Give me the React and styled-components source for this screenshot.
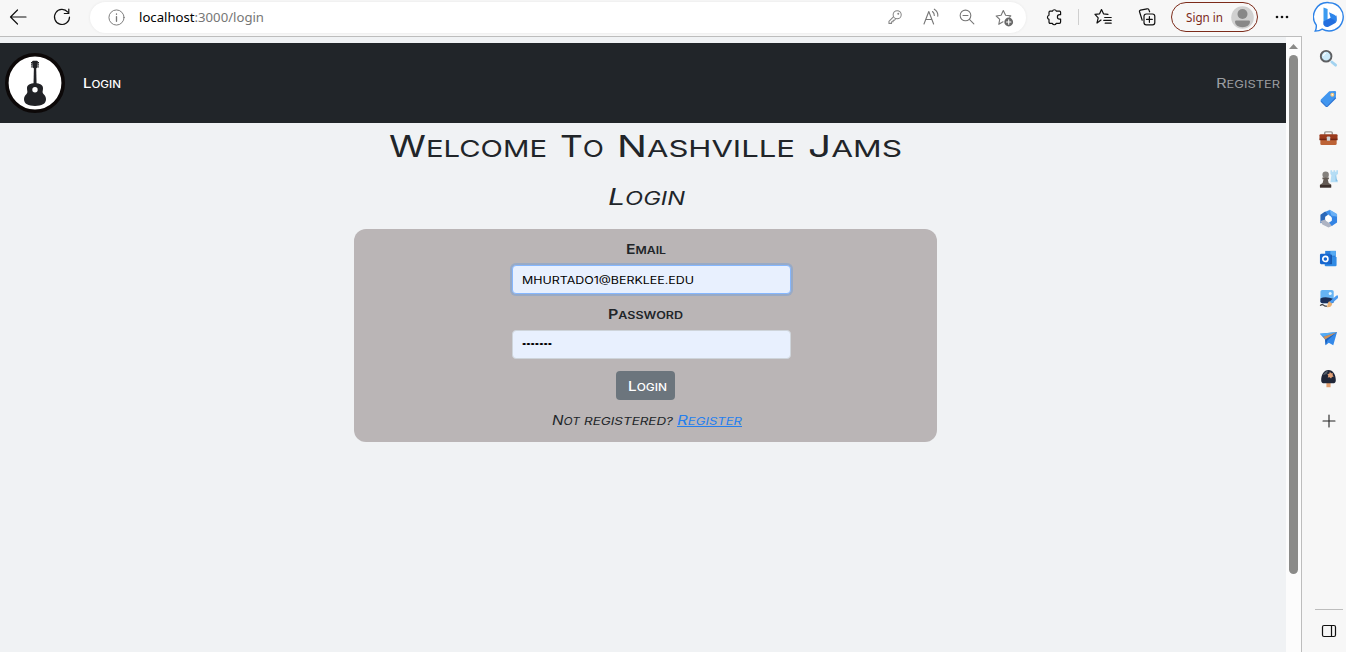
import React, { useLayoutEffect, useRef, useState } from "react";
import styled, { createGlobalStyle, css } from "styled-components";

const Global = createGlobalStyle`
  * { box-sizing: border-box; }
  html, body { margin: 0; height: 100%; overflow: hidden; background: #f7f7f7; }
  #root { height: 100%; }
  svg { display: block; flex: none; }
`;

const Browser = styled.div`
  display: flex;
  width: 1346px;
  height: 652px;
  background: #f7f7f7;
  font-family: "Noto Sans", sans-serif;
`;
const Main = styled.div`
  display: flex;
  flex-direction: column;
  width: 1302px;
`;
const Toolbar = styled.header`
  display: flex;
  align-items: center;
  height: 36px;
  padding: 0 10px 2px 8px;
`;
const ToolIcon = styled.span`
  display: flex;
  align-items: center;
  justify-content: center;
  width: ${(p) => p.$w || 20}px;
  height: 34px;
  margin-left: ${(p) => p.$ml || 0}px;
`;
const AddressBar = styled.div`
  display: flex;
  align-items: center;
  width: 936px;
  height: 31px;
  margin-left: 18px;
  padding: 0 12px 0 16px;
  border-radius: 16px;
  background: #fff;
  box-shadow: 0 0 3px rgba(0, 0, 0, 0.07);
`;
const Url = styled.span`
  flex: 1;
  margin-left: 13px;
  font-size: 13.2px;
  line-height: 30px;
  color: #000;
`;
const UrlPath = styled.span`
  color: #767676;
`;
const Divider = styled.span`
  width: 1px;
  height: 16px;
  margin-left: 14px;
  background: #cfcfcf;
`;
const SignIn = styled.div`
  display: flex;
  align-items: center;
  justify-content: space-between;
  width: 87px;
  height: 30px;
  margin-left: 14px;
  padding: 0 3px 0 14px;
  border: 1px solid #7c2b1a;
  border-radius: 15px;
  font-size: 12.3px;
  color: #7c2b1a;
`;

const Viewport = styled.div`
  display: flex;
  flex: 1;
  border-top: 1px solid #bdbdbd;
  border-right: 1px solid #bdbdbd;
`;
const Page = styled.main`
  display: flex;
  flex-direction: column;
  align-items: center;
  width: 1286px;
  padding-top: 6px;
  background: #f0f2f4;
  color: #212529;
  font-family: Inter, sans-serif;
`;
const Scrollbar = styled.div`
  display: flex;
  flex-direction: column;
  align-items: center;
  width: 15px;
  padding-top: 7px;
  background: #fcfcfc;
`;
const Thumb = styled.div`
  width: 9px;
  height: 519px;
  margin-top: 6px;
  border-radius: 5px;
  background: #8b8b89;
`;

const Navbar = styled.nav`
  display: flex;
  align-items: center;
  width: 100%;
  height: 80px;
  padding: 0 6px 0 5px;
  background: #212529;
`;
const NavLink = styled.a`
  margin-left: ${(p) => (p.$end ? "auto" : "18px")};
  font-size: 10.2px;
  line-height: 14px;
  font-weight: ${(p) => (p.$end ? 400 : 500)};
  color: ${(p) => (p.$end ? "#9b9da0" : "#fff")};
`;
const Title = styled.h1`
  display: flex;
  gap: 13px;
  margin: 6px 0 0 4px;
  height: 35px;
  font-size: 23.2px;
  line-height: 34px;
  font-weight: 400;
`;
const Subtitle = styled.h2`
  margin: 17px 0 0 7px;
  height: 32px;
  font-size: 18px;
  line-height: 32px;
  font-style: italic;
  font-weight: 400;
`;
const Card = styled.section`
  display: flex;
  flex-direction: column;
  align-items: center;
  width: 583px;
  height: 213px;
  margin: 16px 0 0 5px;
  border-radius: 12px;
  background: #bab5b6;
`;
const Label = styled.label`
  height: 16px;
  margin-top: ${(p) => p.$mt}px;
  font-size: 10px;
  line-height: 16px;
  font-weight: 600;
`;
const Field = styled.div`
  display: flex;
  align-items: center;
  width: 279px;
  height: 29px;
  margin: ${(p) => p.$mt}px 0 0 12px;
  padding: 1px 0 0 9px;
  border: 1px solid #ced4da;
  border-radius: 4px;
  background: #e8f0fe;
  color: #000;
  font-size: 10.3px;
  font-weight: 400;
  ${(p) =>
    p.$focused &&
    css`
      border-color: #86b7fe;
      box-shadow: 0 0 0 2px rgba(124, 160, 212, 0.55);
    `}
`;
const Dots = styled.span`
  padding-bottom: 3px;
  font-family: "Liberation Sans", sans-serif;
  font-size: 8px;
  line-height: 10px;
`;
const Button = styled.button`
  display: flex;
  align-items: center;
  justify-content: center;
  width: 59px;
  height: 29px;
  margin-top: 12px;
  padding: 0 1px 0 0;
  border: 0;
  border-radius: 4px;
  background: #6c757d;
  color: #fff;
  font: 500 10.6px Inter, sans-serif;
`;
const Hint = styled.p`
  display: flex;
  align-items: baseline;
  gap: 4px;
  margin: 12px 0 0 2px;
  font-size: 10.2px;
  line-height: 16px;
  font-style: italic;
`;
const HintLink = styled.a`
  height: 15px;
  border-bottom: 1px solid #267fee;
  color: #267fee;
`;

const Sidebar = styled.aside`
  display: flex;
  flex-direction: column;
  align-items: center;
  width: 44px;
  padding: 0 0 0 9px;
`;
const SideItem = styled.div`
  display: flex;
  align-items: center;
  justify-content: center;
  width: 32px;
  height: ${(p) => p.$h || 40}px;
  margin-top: ${(p) => p.$mt || 0}px;
`;
const SideRule = styled.div`
  width: 28px;
  height: 1px;
  margin-top: auto;
  background: #bdbdbd;
`;

const Slot = styled.span`
  display: inline-block;
  width: ${(p) => p.$width}px;
  white-space: nowrap;
`;
const Stretch = styled.span`
  display: inline-block;
  transform-origin: 0 50%;
  ${(p) =>
    p.$caps &&
    css`
      text-transform: uppercase;
      &::first-letter { font-size: ${p.$flat ? "1em" : "1.28em"}; }
    `}
`;

/* Extended lettering: widens its text until it fills the given width. */
function Wide({ width, caps = true, flat = false, children }) {
  const ref = useRef(null);
  const [scale, setScale] = useState(1);
  useLayoutEffect(() => {
    setScale(width / ref.current.getBoundingClientRect().width);
  }, [width]);
  return (
    <Slot $width={width}>
      <Stretch ref={ref} $caps={caps} $flat={flat} style={{ transform: `scaleX(${scale})` }}>
        {children}
      </Stretch>
    </Slot>
  );
}

const Line = ({ w = 18, h = w, box = "0 0 18 18", color = "#222", sw = 1.1, children }) => (
  <svg width={w} height={h} viewBox={box} fill="none" stroke={color} strokeWidth={sw} strokeLinecap="round" strokeLinejoin="round">
    {children}
  </svg>
);

const GuitarLogo = () => (
  <svg width="60" height="60" viewBox="0 0 60 60">
    <circle cx="30" cy="30" r="28.2" fill="#fff" stroke="#0c0808" strokeWidth="3.6" />
    <g fill="#212226">
      <path d="M27 8.5 28 7.8h4l1 .7-.7 6-1 .8h-2.6l-1-.8z" />
      <path d="M26 9h1.3v1.4H26zM26 11.2h1.3v1.4H26zM26.2 13.3h1.3v1.2h-1.3zM32.7 9H34v1.4h-1.3zM32.7 11.2H34v1.4h-1.3zM32.5 13.3h1.3v1.2h-1.3z" />
      <path d="M28.9 15h2.3l.4 17h-3.1z" />
      <path d="M30 30.2c-5 0-8 1.6-8 5 0 3.1 1.2 3.8-.7 6-1.4 1.5-2.3 2.8-2.3 5.1 0 4.6 4.4 6.7 11 6.7s11-2.1 11-6.7c0-2.3-.9-3.6-2.3-5.1-1.9-2.2-.7-2.9-.7-6 0-3.4-3-5-8-5z" />
    </g>
    <circle cx="30" cy="36.8" r="2.7" fill="#fff" />
  </svg>
);

const Bing = () => (
  <svg width="32" height="32" viewBox="0 0 32 32">
    <path d="M16.3 1.7a14.1 14.1 0 1 1-7.1 26.4c-2 1.4-4.5 2-7 2 1-2 1.3-3.8 1.1-6A14.1 14.1 0 0 1 16.3 1.7z" fill="#fff" stroke="#2d83e8" strokeWidth="1.4" />
    <path d="M10.5 6.5 14.6 8v13l-4.1 3z" fill="#3b9bf0" />
    <path d="M10.5 20.5 15 18l8.5-3.4v4.6c0 1.6-.6 2.6-2 3.4l-6 3.1c-2.8 1.2-5-1-5-3z" fill="#246fdf" />
    <path d="m16 11.2 5.3 2.6c1.5.8 2.4 2.2 2.4 4.4 0 1.5-.5 2.5-1.4 3.3.2-1.6-.6-2.4-2-3l-2.5-1z" fill="#2e86ec" />
  </svg>
);
const sideIcons = [
  <g key="search">
    <path d="m13.5 13.7 4 3.3" stroke="#a3d3f0" strokeWidth="3" strokeLinecap="round" />
    <circle cx="7.5" cy="7.6" r="5.6" fill="#cbeafa" stroke="#5d5f62" strokeWidth="2" />
    <path d="M4.6 7.2a3.2 3.2 0 0 1 2.8-2.7" stroke="#fff" strokeWidth="1.2" fill="none" />
  </g>,
  <g key="tag">
    <path d="M10.8 2.3 16.8 2q1.2 0 1.2 1.2l-.3 6L9 18q-.9.8-1.8 0L2 12.8q-.9-.9 0-1.8z" fill="#4196ef" />
    <path d="m2 12.8 5.2 5.2q.9.8 1.8 0l8.7-8.8" stroke="#2d74d2" strokeWidth="1.2" fill="none" />
    <circle cx="14" cy="6" r="2.1" fill="#f5c77a" />
    <circle cx="14" cy="6" r=".8" fill="#fff" />
  </g>,
  <g key="toolbox">
    <path d="M6 6V4.2Q6 3 7.2 3h5.6Q14 3 14 4.2V6" stroke="#9b9690" strokeWidth="1.5" fill="none" />
    <path d="M.5 6.7Q.5 5.5 1.7 5.5h16.6q1.2 0 1.2 1.2V11H.5z" fill="#9c3b1d" />
    <path d="M1.4 10.5h17.2v4.8q0 1.6-1.4 1.6H2.8q-1.4 0-1.4-1.6z" fill="#bd6336" />
    <path d="M.5 10.2h19v1.6H.5z" fill="#722513" />
    <rect x="8.2" y="7.8" width="3.6" height="4.6" rx=".9" fill="#cfd3d6" />
  </g>,
  <g key="chess">
    <path d="M12 1.2h1.8v1.6h1.4V1.2H17v1.6h1.2V1.2H20v4l-1.5 1v5.5L20 14h-8l1-7.5-1-1.3z" fill="#b5ddf5" />
    <path d="M17.5 5.5V13H20l-1.5-2.5z" fill="#83bfe6" />
    <circle cx="7" cy="6" r="3.4" fill="#85817d" />
    <path d="M3.6 9h6.8v1.8H9.2l1 4 2.6 1.6V19.5H1v-3l2.8-1.7 1-4H3.6z" fill="#645b55" />
    <path d="M1 16.8h11.8v2.7H1z" fill="#3c302c" />
  </g>,
  <g key="office">
    <path d="M5 3.6 11 1l7 4v5.7l-4.6-1.5L10 5.8 6.8 8z" fill="#3e8ee7" />
    <path d="M1.5 6 6.5 2.6 9 5.8 6.5 8.2v5.4L1.5 15z" fill="#2b68b8" />
    <path d="M1.5 12.5 6.5 11l3.7 3.4L16 13l-2 4.5L10 19.5 3.5 16.4z" fill="#aeb4c3" />
    <path d="M13.5 9 19 6.5v7.8L13.5 18l-2.8-3.7 2.8-2z" fill="#3484e4" />
    <path d="m11 .5 8 4.7v3L13 6.8z" fill="#6ab0f6" />
    <circle cx="10" cy="10.2" r="3.2" fill="#fff" />
  </g>,
  <g key="outlook">
    <path d="M6.5 2h11.2v6.5H6.5z" fill="#2c80dc" />
    <path d="M12 2h5.7v5H12z" fill="#56aaf3" />
    <path d="M6 8.5h12.5V17q0 1.2-1.2 1.2H7.2Q6 18.2 6 17z" fill="#318be5" />
    <path d="M8 6h5.5v10H8z" fill="#174f9d" />
    <rect x="1" y="5" width="11.2" height="11" rx="1.2" fill="#1767cf" />
    <circle cx="6.7" cy="10.5" r="2.7" stroke="#fff" strokeWidth="1.7" fill="none" />
  </g>,
  <g key="paint">
    <rect x="1.5" y="1" width="14" height="14" rx="2" fill="#66b4f4" />
    <path d="M1.5 10q5-3 14 .5v2.5q0 2-2 2h-10q-2 0-2-2z" fill="#1b2f58" />
    <circle cx="11.8" cy="4.7" r="1.6" fill="#e5f5ff" />
    <path d="m12.5 14 6.6-5.7" stroke="#4c9bf0" strokeWidth="3" strokeLinecap="round" />
    <path d="m10.7 13 3.2 2.6c-.4 2.8-2.3 3.8-5.6 3.6.9-.8.2-4.4 2.4-6.2z" fill="#e9af72" />
    <path d="M1.2 17.5q2-2 3.6-.5t3.5 1" stroke="#343538" strokeWidth="1.3" fill="none" />
  </g>,
  <g key="plane">
    <path d="M1 5 19 3.2 15 17.2 10.3 14.6 7 17l-.7-6z" fill="#3489e9" />
    <path d="M1 5 19 3.2 4.7 8z" fill="#55adf4" />
    <path d="M18.5 3.5 6.3 11 7 17l1.8-5z" fill="#1d62be" />
    <path d="M4.4 8.2 18.6 3.5 6.4 11z" fill="#cf9259" />
  </g>,
  <g key="tree">
    <path d="M7.8 13.5h4.4v5.7H7.8z" fill="#e2a071" />
    <path d="M2.3 11.8C2.3 6 5.3 1 10 1s7.7 5 7.7 10.8c0 2.4-1.4 3.2-3.2 3.2h-9c-1.8 0-3.2-.8-3.2-3.2z" fill="#202638" />
    <path d="M4.2 6.5Q6 2.4 9.5 1.8L8 5.3z" fill="#56606a" />
    <path d="m11.5 3 1.2 1.6 2-.2-.4 2 1.2 1.4-1.9.5-.9 1.7-1.5-1.2-2 .1.6-1.9-.9-1.7 1.9-.3z" fill="#e3a176" />
  </g>,
];

export default function App() {
  return (
    <Browser>
      <Global />
      <Main>
        <Toolbar>
          <ToolIcon><Line color="#111" sw="1.2"><path d="M1.5 9H17M8.5 2 1.5 9l7 7" /></Line></ToolIcon>
          <ToolIcon $ml={24}><Line color="#111" sw="1.2"><path d="M16.5 9A7.5 7.5 0 1 1 14.8 4.2M15.8 1v4.5h-4.5" /></Line></ToolIcon>
          <AddressBar>
            <ToolIcon>
              <Line w={17} color="#777" sw="1"><circle cx="9" cy="9" r="8" /><path d="M9 8v5M9 5.2v.4" strokeWidth="1.4" /></Line>
            </ToolIcon>
            <Url><Wide width={125} caps={false}>localhost<UrlPath>:3000/login</UrlPath></Wide></Url>
            <ToolIcon><Line w={14} box="0 0 18 18" color="#858585" sw="1.3"><circle cx="11.8" cy="6.2" r="5.2" /><circle cx="13.2" cy="4.8" r=".6" fill="#858585" /><path d="m6.9 8.8-5.7 5.7v2.7h3.4v-2h2v-2h1.8l1.4-2" /></Line></ToolIcon>
            <ToolIcon $ml={16}><Line w={18} color="#777"><path d="M2 16 6.8 3.5 11.6 16M3.8 11.5h6M10.5 3.5q2 1.7 1.8 4M12.3 1.2q4 2.5 3.5 7" /></Line></ToolIcon>
            <ToolIcon $ml={16}><Line w={16} color="#777" sw="1.2"><circle cx="7.3" cy="7.3" r="6" /><path d="M4.5 7.3h5.6M11.7 11.7l5 5" /></Line></ToolIcon>
            <ToolIcon $ml={17}>
              <Line w={19} box="0 0 19 19" color="#777"><path d="m8 13.8-4.2 2.5.9-5L1.2 8l4.9-.8L8.3 2.5l2.3 4.7 5.2.7-1.2 1.2" /><circle cx="13.7" cy="14" r="4.4" fill="#686868" stroke="none" /><path d="M13.7 11.8v4.4M11.5 14h4.4" stroke="#fff" /></Line>
            </ToolIcon>
          </AddressBar>
          <ToolIcon $ml={18}><Line w={18} color="#111" sw="1.2"><path d="M5 3.2h2.4a2.1 2.1 0 0 1 4 0h3.2q1 0 1 1v2.5h-1a1.8 1.8 0 0 0 0 4.4h1V14q0 1.3-1.3 1.3h-3a2.1 2.1 0 0 1-4 0H5.2Q4 15.3 4 14v-2.6a2.2 2.2 0 0 1 0-4.2V4.4q0-1.2 1-1.2z" /></Line></ToolIcon>
          <Divider />
          <ToolIcon $ml={14}><Line w={18} color="#111" sw="1.2"><path d="m7 12-4 3 1.2-5.2L1 6.3l4.6-.5L7.5 1.5l2 4.3 4.5.5M10.7 9.5h6.5M9.7 12.3h7.5M11.2 15.2h6" /></Line></ToolIcon>
          <ToolIcon $ml={24}><Line w={18} color="#111" sw="1.2"><path d="M4.2 12.2 1.6 4Q1.1 2.6 2.5 2.2L9 .8q1.3-.3 1.8.8l.8 2.2" /><rect x="6" y="6" width="10.8" height="10.8" rx="2.3" /><path d="M11.4 8.5v5.8M8.5 11.4h5.8" /></Line></ToolIcon>
          <SignIn>
            <Wide width={37} caps={false}>Sign in</Wide>
            <svg width="23" height="23" viewBox="0 0 23 23"><circle cx="11.5" cy="11.5" r="11.3" fill="#d0d0d0" /><circle cx="11.5" cy="8" r="5" fill="#888" /><path d="M4 15.6q0-1.2 1.2-1.2h12.6q1.2 0 1.2 1.2c0 3.6-3.2 5.6-7.5 5.6S4 19.2 4 15.6z" fill="#888" /></svg>
          </SignIn>
          <ToolIcon $ml={14}><svg width="16" height="4" viewBox="0 0 16 4" fill="#111"><circle cx="3" cy="2" r="1.3" /><circle cx="8" cy="2" r="1.3" /><circle cx="13" cy="2" r="1.3" /></svg></ToolIcon>
        </Toolbar>
        <Viewport>
          <Page>
            <Navbar>
              <GuitarLogo />
              <NavLink><Wide width={38}>Login</Wide></NavLink>
              <NavLink $end><Wide width={64}>Register</Wide></NavLink>
            </Navbar>
            <Title>
              <Wide width={158}>Welcome</Wide>
              <Wide width={44}>To</Wide>
              <Wide width={178}>Nashville</Wide>
              <Wide width={94}>Jams</Wide>
            </Title>
            <Subtitle><Wide width={77}>Login</Wide></Subtitle>
            <Card>
              <Label $mt={13}><Wide width={40}>Email</Wide></Label>
              <Field $mt={7} $focused><Wide width={172} flat>mhurtado1@berklee.edu</Wide></Field>
              <Label $mt={13}><Wide width={75}>Password</Wide></Label>
              <Field $mt={7}><Dots><Wide width={30} caps={false}>•••••••</Wide></Dots></Field>
              <Button type="button"><Wide width={39}>Login</Wide></Button>
              <Hint>
                <Wide width={28}>Not</Wide>
                <Wide width={89} flat>registered?</Wide>
                <HintLink><Wide width={65}>Register</Wide></HintLink>
              </Hint>
            </Card>
          </Page>
          <Scrollbar>
            <svg width="9" height="5" viewBox="0 0 9 5"><path d="M0 5 4.5 0 9 5z" fill="#8b8b89" /></svg>
            <Thumb />
          </Scrollbar>
        </Viewport>
      </Main>
      <Sidebar>
        <SideItem $h={34}><Bing /></SideItem>
        {sideIcons.map((icon, i) => (
          <SideItem key={icon.key} $mt={i === 0 ? 4 : 0}>
            <svg width="19" height="19" viewBox="0 0 20 20">{icon}</svg>
          </SideItem>
        ))}
        <SideItem $mt={3}><Line w={14} box="0 0 14 14" color="#222"><path d="M7 1v12M1 7h12" /></Line></SideItem>
        <SideRule />
        <SideItem $h={42}>
          <Line w={16} h={14} box="0 0 16 14" color="#111" sw="1.2"><rect x="1.5" y="1.5" width="13" height="11" rx="1.5" /><path d="M10.5 1.5v11" /></Line>
        </SideItem>
      </Sidebar>
    </Browser>
  );
}
